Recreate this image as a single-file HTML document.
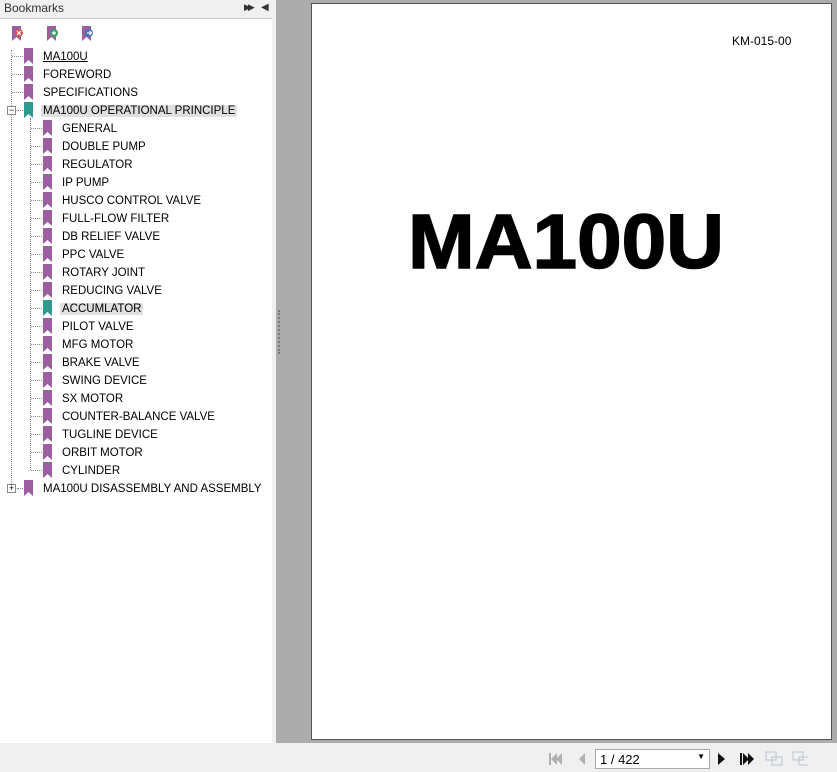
<!DOCTYPE html>
<html><head><style>
*{margin:0;padding:0;box-sizing:border-box}
body{width:837px;height:772px;position:relative;overflow:hidden;font-family:"Liberation Sans",sans-serif;font-size:11.5px;background:#acacac}
.left{position:absolute;left:0;top:0;width:272px;height:743px;background:#fff}
.hdr{position:absolute;left:0;top:0;width:272px;height:19px;background:#f0f0f0;border-bottom:1px solid #c8c8c8;color:#333;padding:1px 0 0 4px;font-size:12px}
.strip{position:absolute;left:272px;top:0;width:4px;height:743px;background:#f0f0f0}
.bot{position:absolute;left:0;top:743px;width:837px;height:29px;background:#f0f0f0}
.page{position:absolute;left:311px;top:3px;width:521px;height:737px;background:#fff;border:1px solid #555}
.row{position:absolute;height:16px;line-height:16px;color:#000;white-space:nowrap}
.bm{position:absolute;width:9px;height:16px}
.vl{position:absolute;border-left:1px dotted #888;width:0}
.hl{position:absolute;border-top:1px dotted #888;height:0}
.sel{background:#e0e0e0;padding:0 2px;margin-left:-2px}
</style></head><body>
<div class="left"></div>
<div class="hdr">Bookmarks
<span style="position:absolute;left:244px;top:2px;font-size:9px;letter-spacing:-3px">▶▶</span>
<span style="position:absolute;left:261px;top:2px;font-size:10px">◀</span></div>
<div class="strip"></div>
<div style="position:absolute;left:278px;top:310px;width:2px;height:44px;border-left:2px dotted #777"></div>

<svg style="position:absolute;left:10px;top:26px" width="90" height="16">
<path d="M2 0h9v15l-4.5-4-4.5 4z" fill="#9b5fa0"/><circle cx="9" cy="7" r="4" fill="#d9534f"/><path d="M7 5l4 4M11 5l-4 4" stroke="#fff" stroke-width="1.2"/>
<path d="M37 0h9v15l-4.5-4-4.5 4z" fill="#9b5fa0"/><circle cx="44" cy="7" r="4" fill="#3aa06a"/><path d="M44 5v4M42 7h4" stroke="#fff" stroke-width="1.2"/>
<path d="M72 0h9v15l-4.5-4-4.5 4z" fill="#9b5fa0"/><circle cx="79" cy="7" r="4" fill="#3e78b8"/><path d="M77 7h4M79.5 5l2 2-2 2" stroke="#fff" stroke-width="1.2" fill="none"/>
</svg>

<div class="vl" style="left:11px;top:50px;height:438px"></div>
<div class="vl" style="left:30px;top:118px;height:352px"></div>
<div style="position:absolute;left:7px;top:106px;width:9px;height:9px;border:1px solid #888;background:#fff;font-size:9px;line-height:7px;text-align:center">−</div>
<div style="position:absolute;left:7px;top:484px;width:9px;height:9px;border:1px solid #888;background:#fff;font-size:9px;line-height:7px;text-align:center">+</div>

<div id="tree"></div>
<script>
var items=[[0,"MA100U",0],[0,"FOREWORD"],[0,"SPECIFICATIONS"],[0,"MA100U OPERATIONAL PRINCIPLE",2],
[1,"GENERAL"],[1,"DOUBLE PUMP"],[1,"REGULATOR"],[1,"IP PUMP"],[1,"HUSCO CONTROL VALVE"],[1,"FULL-FLOW FILTER"],[1,"DB RELIEF VALVE"],[1,"PPC VALVE"],[1,"ROTARY JOINT"],[1,"REDUCING VALVE"],[1,"ACCUMLATOR",2],[1,"PILOT VALVE"],[1,"MFG MOTOR"],[1,"BRAKE VALVE"],[1,"SWING DEVICE"],[1,"SX MOTOR"],[1,"COUNTER-BALANCE VALVE"],[1,"TUGLINE DEVICE"],[1,"ORBIT MOTOR"],[1,"CYLINDER"],[0,"MA100U DISASSEMBLY AND ASSEMBLY"]];
var h="";
items.forEach(function(it,i){
 var y=48+i*18,l=it[0],ix=l?43:24,tx=l?62:43,lx=l?30:11;
 var col=it[2]==2?"#2e9a8e":"#9b5fa0";
 if(!(l==0&&(i==3||i==24)))h+='<div class="hl" style="left:'+(lx+1)+'px;top:'+(y+8)+'px;width:'+(ix-lx-2)+'px"></div>';
 else h+='<div class="hl" style="left:17px;top:'+(y+8)+'px;width:6px"></div>';
 h+='<svg class="bm" style="left:'+ix+'px;top:'+y+'px" width="9" height="16"><path d="M0 0h9v16l-4.5-4-4.5 4z" fill="'+col+'"/></svg>';
 var t=it[1];
 if(i==0)t='<u>'+t+'</u>';
 if(it[2]==2)t='<span class="sel">'+t+'</span>';
 h+='<div class="row" style="left:'+tx+'px;top:'+(y+1)+'px">'+t+'</div>';
});
document.getElementById('tree').innerHTML=h;
</script>

<div class="page">
<div style="position:absolute;left:420px;top:30px;font-size:12px">KM-015-00</div>
<div style="position:absolute;left:96px;top:200px;font-size:77px;font-weight:bold;line-height:77px;transform:scaleX(1.04);transform-origin:left;-webkit-text-stroke:1.5px #000;white-space:nowrap">MA100U</div>
</div>

<div class="bot">
<svg style="position:absolute;left:548px;top:8px" width="260" height="16">
<path d="M1 2h2v12H1zM9 2L3 8l6 6zM14 2L8 8l6 6z" fill="#b0b0b0"/>
<path d="M37 2l-6 6 6 6z" fill="#b0b0b0"/>
<path d="M170 2l7 6-7 6z" fill="#111"/>
<path d="M192 2h2v12h-2zM195 2l6 6-6 6zM200 2l6 6-6 6z" fill="#111"/>
<rect x="218" y="1" width="10" height="8" fill="none" stroke="#b8c4d0"/><rect x="224" y="6" width="10" height="8" fill="none" stroke="#b8c4d0"/>
<rect x="245" y="1" width="10" height="8" fill="none" stroke="#b8c4d0"/><rect x="251" y="6" width="10" height="8" fill="none" stroke="#b8c4d0"/>
</svg>
<div style="position:absolute;left:595px;top:6px;width:115px;height:20px;background:#fff;border:1px solid #aaa;padding:2px 4px;font-size:13px">1 / 422<span style="position:absolute;right:4px;top:2px;font-size:8px">▼</span></div>
</div>
</body></html>
